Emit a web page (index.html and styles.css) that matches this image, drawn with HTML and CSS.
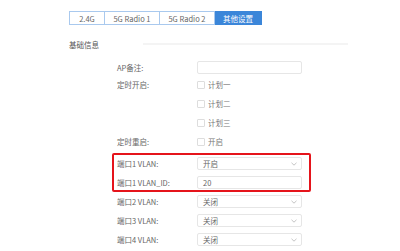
FILE: index.html
```html
<!DOCTYPE html>
<html lang="zh-CN">
<head>
  <meta charset="UTF-8">
  <title>AP 设置</title>
  <link rel="stylesheet" href="styles.css">
</head>
<body>

  <div class="page">
    <!-- Tabs -->
    <div class="tabs">
      <span class="tab t1">2.4G</span>
      <span class="tab t2">5G Radio 1</span>
      <span class="tab t3">5G Radio 2</span>
      <span class="tab t4 active">其他设置</span>
    </div>

    <div class="section-head">
      <span class="title">基础信息</span>
      <i class="rule"></i>
    </div>

    <div class="form">
      <div class="row row-input">
        <label>AP备注:</label>
        <span class="field"></span>
      </div>
      <div class="row row-check">
        <label>定时开启:</label>
        <span class="check"><i class="box"></i>计划一</span>
      </div>
      <div class="row row-check">
        <label></label>
        <span class="check"><i class="box"></i>计划二</span>
      </div>
      <div class="row row-check">
        <label></label>
        <span class="check"><i class="box"></i>计划三</span>
      </div>
      <div class="row row-check">
        <label>定时重启:</label>
        <span class="check"><i class="box"></i>开启</span>
      </div>

      <div class="highlight">
        <div class="row row-sel">
          <label>端口1 VLAN:</label>
          <span class="field select">开启<svg viewBox="0 0 6 4"><path d="M0.5 0.8 L3 3.2 L5.5 0.8" /></svg></span>
        </div>
        <div class="row row-sel">
          <label>端口1 VLAN_ID:</label>
          <span class="field">20</span>
        </div>
      </div>

      <div class="row row-sel first-after">
        <label>端口2 VLAN:</label>
        <span class="field select">关闭<svg viewBox="0 0 6 4"><path d="M0.5 0.8 L3 3.2 L5.5 0.8" /></svg></span>
      </div>
      <div class="row row-sel">
        <label>端口3 VLAN:</label>
        <span class="field select">关闭<svg viewBox="0 0 6 4"><path d="M0.5 0.8 L3 3.2 L5.5 0.8" /></svg></span>
      </div>
      <div class="row row-sel">
        <label>端口4 VLAN:</label>
        <span class="field select">关闭<svg viewBox="0 0 6 4"><path d="M0.5 0.8 L3 3.2 L5.5 0.8" /></svg></span>
      </div>
    </div>
  </div>

</body>
</html>
```

FILE: styles.css
```css
body { margin: 0; background: #fff; font-family: "Noto Sans CJK SC", "Liberation Sans", sans-serif; font-size: 8px; color: #666; }
.page { padding: 11px 0 0 69px; }

.tabs { display: flex; height: 14px; }
.tab { display: flex; align-items: center; justify-content: center; box-sizing: border-box; height: 14px; border: 1px solid #a9c9ee; border-left: none; color: #666; font-size: 7.5px; }
.tab.t1 { width: 36px; border-left: 1px solid #a9c9ee; }
.tab.t2 { width: 55px; }
.tab.t3 { width: 55px; }
.tab.t4 { width: 47px; }
.tab.active { background: #3b86d9; border-color: #3b86d9; color: #fff; }

.section-head { display: flex; align-items: center; margin-top: 14px; height: 10px; }
.section-head .title { color: #555; font-size: 7.5px; width: 74px; }
.section-head .rule { display: block; width: 205px; height: 2px; background: #f4f4f4; }

.form { margin: 12px 0 0 48px; width: 185px; }
.row { display: flex; align-items: center; }
.row label { width: 80px; flex: none; color: #666; font-size: 7.5px; }
.row-input { height: 13px; margin-bottom: 1px; }
.row-check { height: 19px; }
.row-sel { height: 13px; margin-bottom: 6px; }
.row-sel:last-child { margin-bottom: 0; }

.field { box-sizing: border-box; flex: 1; height: 13px; border: 1px solid #e6e6e6; border-radius: 2px; display: flex; align-items: center; padding-left: 5px; font-size: 7.5px; color: #666; }
.select { justify-content: space-between; padding-right: 4px; }
.select svg { width: 6px; height: 4px; fill: none; stroke: #aaa; stroke-width: 0.7; }

.check { display: flex; align-items: center; color: #777; font-size: 7.5px; }
.check .box { display: block; box-sizing: border-box; width: 8px; height: 8px; border: 1px solid #ddd; border-radius: 1px; margin-right: 3px; }

.highlight { margin: 2px 0 0 -5px; border: 2px solid #e5141b; border-radius: 2px; padding: 2px 7px 1px 3px; width: 185px; }
.highlight .row-sel { margin-bottom: 6px; }
.highlight .row-sel:last-child { margin-bottom: 0; }
.first-after { margin-top: 3px; }
```
